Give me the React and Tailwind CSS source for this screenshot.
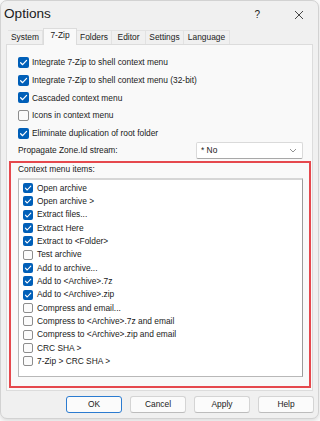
import React from 'react';

const font = { fontFamily: '"Liberation Sans", Arial, sans-serif' };

const Check = ({ checked, size = 11 }) => (
    <span
        className={`shrink-0 flex items-center justify-center rounded-[2px] ${checked ? 'bg-[#005fb8]' : 'bg-[#fbfbfb] border border-[#8d8d8d]'}`}
        style={{ width: size, height: size }}
    >
        {checked && (
            <svg width={size} height={size} viewBox="0 0 10 10">
                <path d="M2.4 5.2 L4.2 7 L7.8 3.1" fill="none" stroke="white" strokeWidth="1.1" strokeLinecap="round" strokeLinejoin="round" />
            </svg>
        )}
    </span>
);

const options = [
    ['Integrate 7-Zip to shell context menu', true],
    ['Integrate 7-Zip to shell context menu (32-bit)', true],
    ['Cascaded context menu', true],
    ['Icons in context menu', false],
    ['Eliminate duplication of root folder', true],
];

const items = [
    ['Open archive', true],
    ['Open archive >', true],
    ['Extract files...', true],
    ['Extract Here', true],
    ['Extract to <Folder>', true],
    ['Test archive', false],
    ['Add to archive...', true],
    ['Add to <Archive>.7z', true],
    ['Add to <Archive>.zip', true],
    ['Compress and email...', false],
    ['Compress to <Archive>.7z and email', false],
    ['Compress to <Archive>.zip and email', false],
    ['CRC SHA >', false],
    ['7-Zip > CRC SHA >', false],
];

const tabs = ['System', '7-Zip', 'Folders', 'Editor', 'Settings', 'Language'];
const tabWidths = [35, 34, 35, 34, 38, 46];

export default function App() {
    return (
        <div className="w-[320px] h-[421px] bg-[#fafafa] text-[#1a1a1a] text-[8.4px]" style={font}>
            <div className="w-[319px] h-[419px] rounded-[7px] border border-[#d2d2d2] bg-[#f0f0f0] flex flex-col shadow-[0_2px_4px_rgba(0,0,0,0.12)]">
                {/* title bar */}
                <div className="h-[27px] flex items-center shrink-0">
                    <span className="ml-[3px] text-[13.6px] text-[#1a1a1a]">Options</span>
                    <span className="ml-auto mr-[34px] text-[10px] text-[#222]">?</span>
                    <svg width="10" height="10" viewBox="0 0 10 10" className="mr-[14px]">
                        <path d="M1 1 L9 9 M9 1 L1 9" stroke="#333" strokeWidth="0.9" />
                    </svg>
                </div>

                {/* tabs */}
                <div className="flex items-end h-[16px] ml-[7px] shrink-0">
                    {tabs.map((t, i) => (
                        <div
                            key={t}
                            className={`flex items-center justify-center ${i === 1 ? 'h-[17px] bg-[#f9f9f9] border border-b-0 border-[#dcdcdc] relative z-10 -mb-px pb-[3px]' : 'h-[14px] bg-[#f0f0f0] border-t border-r border-[#e2e2e2]'}`}
                            style={{ width: tabWidths[i] }}
                        >
                            {t}
                        </div>
                    ))}
                </div>

                {/* panel */}
                <div className="mx-[5px] h-[347px] border border-[#dcdcdc] bg-[#f9f9f9] flex flex-col shrink-0">
                    <div className="pt-[8.5px] pl-[11px] pr-[9px] flex flex-col">
                        {options.map(([label, on]) => (
                            <div key={label} className="h-[17.75px] flex items-center gap-[3px]">
                                <Check checked={on} />
                                <span>{label}</span>
                            </div>
                        ))}
                        <div className="h-[17px] flex items-center justify-between">
                            <span className="ml-[0px]">Propagate Zone.Id stream:</span>
                            <div className="w-[107px] h-[17px] bg-white border border-[#dadada] border-b-[#a8a8a8] rounded-[2px] flex items-center px-[4px]">
                                <span>* No</span>
                                <svg width="8" height="5" viewBox="0 0 8 5" className="ml-auto mr-[1px]">
                                    <path d="M1 1 L4 4 L7 1" fill="none" stroke="#777" strokeWidth="0.8" />
                                </svg>
                            </div>
                        </div>
                    </div>

                    {/* context menu items (highlighted) */}
                    <div className="mt-[2px] ml-[2px] mr-[1px] h-[227px] border-2 border-[#e5484d] flex flex-col">
                        <div className="h-[13px] flex items-center pl-[7px]">Context menu items:</div>
                        <div className="mt-[2px] ml-[7px] mr-[6px] h-[199px] bg-white border border-[#b8b8b8] border-t-2 border-t-[#d6d6d6] border-r-[#9a9a9a] pt-px pl-[4px] flex flex-col">
                            {items.map(([label, on]) => (
                                <div key={label} className="h-[13.33px] flex items-center gap-[4px]">
                                    <Check checked={on} size={10} />
                                    <span>{label}</span>
                                </div>
                            ))}
                        </div>
                    </div>
                </div>

                {/* buttons */}
                <div className="mt-[5px] flex justify-end gap-[8px] pr-[4px]">
                    {['OK', 'Cancel', 'Apply', 'Help'].map(b => (
                        <div
                            key={b}
                            className={`w-[56px] h-[17px] rounded-[3px] bg-[#fbfbfb] flex items-center justify-center ${b === 'OK' ? 'border border-[#2b7bd0]' : 'border border-[#d4d4d4] border-b-[#bcbcbc]'}`}
                        >
                            {b}
                        </div>
                    ))}
                </div>
            </div>
        </div>
    );
}
